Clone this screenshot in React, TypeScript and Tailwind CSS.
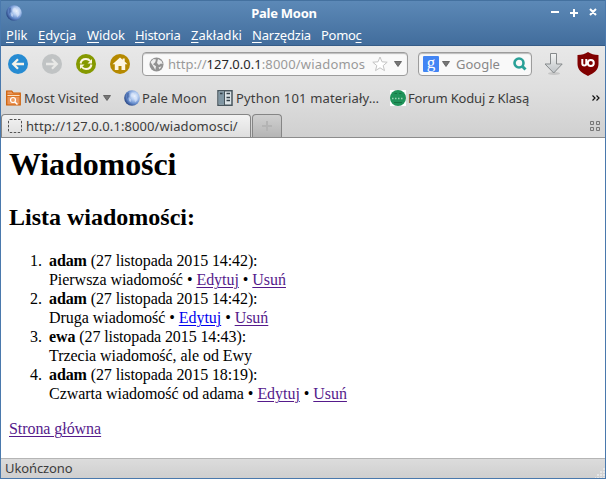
import React from 'react';

const ui = 'font-["Noto_Sans","Open_Sans",sans-serif]';

function MoonIcon({ id }: { id: string }) {
  return (
    <svg width="16" height="16" viewBox="0 0 16 16" className="block shrink-0">
      <defs>
        <radialGradient id={id} cx="66%" cy="38%" r="68%">
          <stop offset="0" stopColor="#eef4fe" />
          <stop offset=".35" stopColor="#b4ccf0" />
          <stop offset=".7" stopColor="#668ccc" />
          <stop offset="1" stopColor="#2a4886" />
        </radialGradient>
      </defs>
      <circle cx="8" cy="8" r="7.8" fill={`url(#${id})`} />
      <path d="M8 2.5l2 1-.5 2.5-2 1-1-2zM10 8l3-1 .6 3-2.5 2.5zM5 8l2 1v3l-2-1z" fill="#e8f0ff" opacity=".45" />
      <path d="M3 3.5l2-1 .5 4L3 9z" fill="#1d3c80" opacity=".4" />
    </svg>
  );
}

function Menu({ before = '', accel, after, className }: { before?: string; accel: string; after: string; className: string }) {
  return (
    <span className={`shrink-0 whitespace-nowrap ${className}`}>
      {before}
      <span className="underline decoration-1 underline-offset-2">{accel}</span>
      {after}
    </span>
  );
}

function Circle({ color, children }: { color: string; children: React.ReactNode }) {
  return (
    <svg width="20" height="20" viewBox="0 0 20 20" className="block shrink-0">
      <circle cx="10" cy="10" r="10" fill={color} />
      {children}
    </svg>
  );
}

function Arrow({ className = '' }: { className?: string }) {
  return (
    <svg width="8" height="6" viewBox="0 0 8 6" className={`block shrink-0 ${className}`}>
      <path d="M.5.5h7L4 5.5z" fill="#777" stroke="#555" strokeWidth=".8" />
    </svg>
  );
}

function Link({ children, fresh }: { children: string; fresh?: boolean }) {
  return (
    <a className={`underline decoration-1 underline-offset-2 ${fresh ? 'text-[#0000ee]' : 'text-[#551a8b]'}`}>{children}</a>
  );
}

const messages = [
  { user: 'adam', date: '27 listopada 2015 14:42', text: 'Pierwsza wiadomość', links: true },
  { user: 'adam', date: '27 listopada 2015 14:42', text: 'Druga wiadomość', links: true, fresh: true },
  { user: 'ewa', date: '27 listopada 2015 14:43', text: 'Trzecia wiadomość, ale od Ewy' },
  { user: 'adam', date: '27 listopada 2015 18:19', text: 'Czwarta wiadomość od adama', links: true },
];

export default function App() {
  return (
    <div className={`flex h-[479px] w-[606px] flex-col overflow-hidden border border-t-0 border-[#4a79ad] bg-white text-[13px] leading-[18px] text-[#3c3c3c] ${ui}`}>
      <header className="h-[46px] shrink-0 border-t border-b border-t-[#44719f] border-b-[#365c87] bg-linear-to-b from-[#5c89b7] to-[#426d9c] text-white">
        <div className="flex h-[23px] items-center pl-[5px] pr-[7px]">
          <MoonIcon id="moon-title" />
          <div className="flex flex-1 justify-center pr-[7px] pl-[3px] text-[13px] font-bold tracking-[-0.25px]">
            <span>Pale Moon</span>
          </div>
          <svg width="48" height="11" viewBox="0 0 48 11" className="block shrink-0" fill="none" stroke="#fff" strokeWidth="2">
            <path d="M1 5h8M20 6h8M24 2v8M40 2l6 6M46 2l-6 6" />
          </svg>
        </div>
        <nav className="flex h-[21px] pt-px pl-[5px] leading-[21px]">
          <Menu accel="P" after="lik" className="w-[32px]" />
          <Menu accel="E" after="dycja" className="w-[49px] tracking-[-0.1px]" />
          <Menu accel="W" after="idok" className="w-[48px] tracking-[-0.1px]" />
          <Menu accel="H" after="istoria" className="w-[56px] tracking-[-0.3px]" />
          <Menu accel="Z" after="akładki" className="w-[61px] tracking-[0.05px]" />
          <Menu accel="N" after="arzędzia" className="w-[69px] tracking-[-0.2px]" />
          <Menu before="Pomo" accel="c" after="" className="tracking-[-0.3px]" />
        </nav>
      </header>

      <div className="flex h-[92px] shrink-0 flex-col border-b border-[#8c8c8c] bg-linear-to-b from-[#e8e8e8] via-[#dedede] to-[#d0d0d0]">
        <div className="flex h-[36px] items-center pl-[7px]">
          <Circle color="#268bd2">
            <path d="M16 10H5.500M10 5.200L5.200 10l4.800 4.800" fill="none" stroke="#f5f2e8" strokeWidth="2.300" />
          </Circle>
          <span className="w-[14px]" />
          <Circle color="#c0c3c4">
            <path d="M4 10h10.500M10 5.200l4.800 4.800-4.800 4.800" fill="none" stroke="#e8e8e6" strokeWidth="2.300" />
          </Circle>
          <span className="w-[14px]" />
          <Circle color="#859900">
            <path d="M4.600 9.500C5 6.500 7 5 10 5c2 0 3.200.7 4.200 2M15.400 10.500C15 13.500 13 15 10 15c-2 0-3.200-.7-4.200-2" fill="none" stroke="#fdf6e3" strokeWidth="2" />
            <path d="M16 5v4.500h-4.500zM4 15v-4.500h4.500z" fill="#fdf6e3" />
          </Circle>
          <span className="w-[14px]" />
          <Circle color="#b58900">
            <path d="M10 3.500L2.500 10.300h2.300V16h3.700v-4h3v4h3.700v-5.700h2.300l-2.800-2.800V4.500h-2v1.300z" fill="#fdf6e3" />
          </Circle>
          <div className="ml-[12px] flex h-[24px] w-[266px] shrink-0 items-center rounded-[4px] border-[1.500px] border-[#9c9c9c] bg-[#f9f9f9] pl-[6px] shadow-[inset_0_1px_1px_#bbb]">
            <svg width="15" height="15" viewBox="0 0 15 15" className="block shrink-0">
              <circle cx="7.500" cy="7.500" r="7" fill="#929292" />
              <path d="M1.500 5l3-3 2.500.5-.8 2.700L4 7.200l3 2-.7 3.800L4.700 10zM9 2l3.500 2 1.200 3-1.800-.5-2 1.500L8 6zM9.500 10.500l3-1.200-1.800 3z" fill="#eee" />
            </svg>
            <span className="ml-[4px] w-[200px] shrink-0 whitespace-nowrap text-[#999]">
              http://<span className="text-[#262626]">127.0.0.1</span><span className="tracking-[0.18px]">:8000/wiadomos</span>
            </span>
            <svg width="16" height="16" viewBox="0 0 16 16" className="ml-[4px] block shrink-0">
              <path d="M8 1l2 4.800 5.200.4-4 3.400 1.300 5L8 11.800l-4.500 2.800 1.300-5-4-3.400L6 5.800z" fill="#fff" stroke="#c4c4c4" />
            </svg>
            <Arrow className="ml-[6px]" />
          </div>
          <div className="ml-[10px] flex h-[24px] w-[114px] shrink-0 items-center rounded-[4px] border-[1.500px] border-[#9c9c9c] bg-[#f9f9f9] pl-[4px] shadow-[inset_0_1px_1px_#bbb]">
            <span className='flex h-[16px] w-[16px] shrink-0 items-center justify-center rounded-[1px] bg-[#4285f4] pb-[3px] font-["Liberation_Serif",serif] text-[17px] leading-[16px] text-white'>g</span>
            <Arrow className="ml-[3px]" />
            <span className="ml-[6px] w-[57px] text-[#888]">Google</span>
            <svg width="14" height="14" viewBox="0 0 14 14" className="block shrink-0" fill="none" stroke="#2aa198">
              <circle cx="6" cy="6" r="4.500" strokeWidth="2.600" />
              <path d="M9 9l3.500 3.500" strokeWidth="3" />
            </svg>
          </div>
          <svg width="20" height="24" viewBox="0 0 20 24" className="ml-[12px] block shrink-0">
            <defs>
              <linearGradient id="download" x2="0" y2="1">
                <stop offset="0" stopColor="#f4f5f5" />
                <stop offset="1" stopColor="#bdc2c5" />
              </linearGradient>
            </defs>
            <ellipse cx="10" cy="21.500" rx="6" ry="1.500" fill="#aaa" opacity=".5" />
            <path d="M6.500 1.500h6V12h5.700L9.700 21 1 12h5.500z" fill="url(#download)" stroke="#85898b" />
          </svg>
          <svg width="22" height="24" viewBox="0 0 22 24" className="ml-[13px] block shrink-0">
            <path d="M11 0c3 2 6 3 10.500 3v9c0 6-4.500 9-10.500 12C5 21 .5 18 .5 12V3C5 3 8 2 11 0z" fill="#800000" />
            <path d="M5.300 7v4.500a2 2 0 0 0 4 0V7" fill="none" stroke="#fff" strokeWidth="2" />
            <circle cx="13.800" cy="11" r="3" fill="none" stroke="#fff" strokeWidth="2" />
          </svg>
        </div>

        <div className="flex h-[32px] items-center pl-[5px] whitespace-nowrap">
          <svg width="15" height="16" viewBox="0 0 15 16" className="block shrink-0">
            <path d="M.7 15V1h5l1.500 2h7v12z" fill="#e9955a" stroke="#ce5c00" strokeWidth="1.200" />
            <path d="M1 4.500h13v2H1z" fill="#fbe0c0" stroke="#d6640c" strokeWidth=".8" />
            <circle cx="7" cy="10" r="2.500" fill="#ef9e60" stroke="#fff" strokeWidth="1.200" />
            <path d="M9 12l2.500 2.500" stroke="#fff" strokeWidth="1.500" />
          </svg>
          <span className="ml-[3px] w-[79px]">Most Visited</span>
          <Arrow />
          <span className="w-[13px]" />
          <MoonIcon id="moon-bookmark" />
          <span className="ml-[2px] w-[75px]">Pale Moon</span>
          <svg width="16" height="16" viewBox="0 0 16 16" className="block shrink-0">
            <path d="M1 .8h14v14.400H1z" fill="#dce4e8" stroke="#48565e" strokeWidth="1.500" />
            <path d="M1.500 1.500H7v13H1.500z" fill="#8096a3" />
            <path d="M7.500 1v14" stroke="#48565e" />
            <path d="M3 3.500h2.500M9.500 3.500H13M9.500 7.500H13M9.500 10.500H13" stroke="#344149" strokeWidth="1.500" />
          </svg>
          <span className="ml-[3px] w-[154px] tracking-[0.18px]">Python 101 materiały…</span>
          <svg width="16" height="16" viewBox="0 0 16 16" className="block shrink-0">
            <path d="M0 0h16v16H0z" fill="#fff" />
            <circle cx="8" cy="8" r="8" fill="#20935a" />
            <path d="M4.500 3.500h2.500M9 3.500h2.500M4 12.500h8" stroke="#147442" strokeWidth="1.200" />
            <path d="M2 8.500h12" stroke="#9ad1b4" strokeWidth="1.500" strokeDasharray="1.500 1.500" />
          </svg>
          <span className="ml-[2px] w-[184px] tracking-[-0.15px]">Forum Koduj z Klasą</span>
          <svg width="8" height="6" viewBox="0 0 8 6" className="block shrink-0" fill="none" stroke="#111" strokeWidth="1.200">
            <path d="M.5.5L3 3 .5 5.500M4.500.5L7 3 4.500 5.500" />
          </svg>
        </div>

        <div className="flex h-[23px] items-end">
          <div className="flex h-[23px] w-[250px] shrink-0 items-center rounded-t-[4px] border border-b-0 border-[#858585] bg-linear-to-b from-[#f3f3f3] to-[#dedede] pl-[6px]">
            <svg width="14" height="14" viewBox="0 0 14 14" className="block shrink-0">
              <rect x=".5" y=".5" width="13" height="13" rx="1.500" fill="none" stroke="#555" strokeDasharray="2.500 1.500" />
            </svg>
            <span className="ml-[4px] whitespace-nowrap tracking-[0.08px]">http://127.0.0.1:8000/wiadomosci/</span>
          </div>
          <div className="ml-px flex h-[23px] w-[30px] shrink-0 items-center justify-center rounded-t-[4px] border border-b-0 border-[#858585] bg-linear-to-b from-[#d0d0d0] to-[#b5b5b5]">
            <svg width="10" height="10" viewBox="0 0 10 10" stroke="#b4b4b4" strokeWidth="2"><path d="M0 5h10M5 0v10" /></svg>
          </div>
          <svg width="10" height="10" viewBox="0 0 10 10" className="mr-[5px] mb-[6px] ml-auto block" fill="none" stroke="#777">
            <path d="M.5.5h3v3h-3zM6.500.5h3v3h-3zM.5 6.500h3v3h-3zM6.500 6.500h3v3h-3z" />
          </svg>
        </div>
      </div>

      <main className='min-h-0 flex-1 px-2 pt-[8px] font-["Liberation_Serif","Times_New_Roman",serif] text-[16px] leading-[19px] text-black'>
        <h1 className="text-[32px] leading-[37px] font-bold tracking-[-0.1px]">Wiadomości</h1>
        <h2 className="mt-[21px] text-[24px] leading-[27px] font-bold">Lista wiadomości:</h2>
        <ol className="mt-[20px] pl-[21px]">
          {messages.map((m, i) => (
            <li key={i} className="flex">
              <span className="w-[19px] shrink-0">{i + 1}.</span>
              <div>
                <div className="tracking-[-0.1px]"><b>{m.user}</b> ({m.date}):</div>
                <div className="tracking-[-0.04px]">
                  {m.text}
                  {m.links && (
                    <> • <Link fresh={m.fresh}>Edytuj</Link> • <Link>Usuń</Link></>
                  )}
                </div>
              </div>
            </li>
          ))}
        </ol>
        <p className="mt-4 tracking-[-0.06px]"><Link>Strona główna</Link></p>
      </main>

      <footer className="flex h-[20px] shrink-0 items-center justify-between border-t border-[#b5b5b5] bg-linear-to-b from-[#dcdcdc] to-[#cfcfcf] pl-[4px]">
        <span className="pb-px tracking-[-0.1px]">Ukończono</span>
        <svg width="10" height="10" viewBox="0 0 10 10" className="mt-auto block" fill="#e6e6e6">
          <path d="M8 0h2v2H8zM5 3h2v2H5zM8 3h2v2H8zM2 6h2v2H2zM5 6h2v2H5zM8 6h2v2H8zM0 9h1v1H0zM2 9h2v1H2zM5 9h2v1H5zM8 9h2v1H8z" />
        </svg>
      </footer>
    </div>
  );
}
